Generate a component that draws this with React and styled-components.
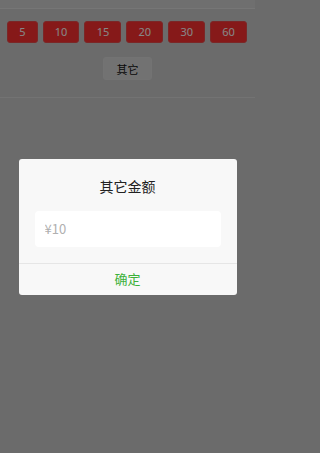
import React, { useState } from "react";
import styled, { createGlobalStyle } from "styled-components";

const GlobalStyle = createGlobalStyle`
  * {
    box-sizing: border-box;
  }
  html, body {
    margin: 0;
    padding: 0;
    background: #6b6b6b;
    font-family: "Noto Sans CJK SC", "Noto Sans", sans-serif;
  }
`;

const Frame = styled.div`
  position: relative;
  width: 255px;
  height: 453px;
  overflow: hidden;
  background: #c4c4c4;
`;

const TopStrip = styled.div`
  height: 9px;
  background: #cbcbcb;
  border-bottom: 1px solid #d8d8d8;
`;

const AmountRow = styled.div`
  display: flex;
  gap: 5px;
  padding: 12px 8px 0 7px;
`;

const AmountButton = styled.button`
  flex: 1 1 auto;
  min-width: 0;
  height: 22px;
  padding: 0 8px;
  border: 1px solid #e04848;
  border-radius: 3px;
  background: #f42e2e;
  color: #f4f4f4;
  font-family: "Noto Sans", sans-serif;
  font-size: 11px;
  line-height: 20px;
`;

const OtherWrap = styled.div`
  display: flex;
  justify-content: center;
  padding: 14px 0 17px;
  border-bottom: 1px solid #d2d2d2;
`;

const OtherButton = styled.button`
  width: 49px;
  height: 23px;
  padding: 0;
  border: 1px solid #d2d2d2;
  border-radius: 3px;
  background: #d0d0d0;
  color: #111;
  font-family: "Noto Sans CJK SC", sans-serif;
  font-size: 11px;
`;

const Mask = styled.div`
  position: absolute;
  inset: 0;
  background: rgba(0, 0, 0, 0.45);
  display: flex;
  align-items: center;
  justify-content: center;
`;

const Dialog = styled.div`
  width: 218px;
  background: #f8f8f8;
  border-radius: 3px;
  display: flex;
  flex-direction: column;
`;

const Title = styled.div`
  padding-top: 17px;
  text-align: center;
  font-size: 14px;
  line-height: 20px;
  color: #222;
`;

const Field = styled.input`
  margin: 15px 16px 16px;
  height: 36px;
  padding: 0 10px;
  border: none;
  border-radius: 4px;
  background: #fff;
  font-family: "Noto Sans CJK SC", "Noto Sans", sans-serif;
  font-size: 13px;
  color: #333;
  outline: none;
  &::placeholder {
    color: #b0b0b0;
  }
`;

const Confirm = styled.button`
  height: 32px;
  padding: 0 0 2px;
  border: none;
  border-top: 1px solid #e6e6e6;
  background: transparent;
  color: #3cb13a;
  font-family: "Noto Sans CJK SC", sans-serif;
  font-size: 13px;
`;

const amounts = [5, 10, 15, 20, 30, 60];

export default function App() {
  const [value, setValue] = useState("");

  return (
    <>
      <GlobalStyle />
      <Frame>
        <TopStrip />
        <AmountRow>
          {amounts.map((a) => (
            <AmountButton key={a}>{a}</AmountButton>
          ))}
        </AmountRow>
        <OtherWrap>
          <OtherButton>其它</OtherButton>
        </OtherWrap>
        <Mask>
          <Dialog>
            <Title>其它金额</Title>
            <Field
              placeholder="¥10"
              value={value}
              onChange={(e) => setValue(e.target.value)}
            />
            <Confirm>确定</Confirm>
          </Dialog>
        </Mask>
      </Frame>
    </>
  );
}
